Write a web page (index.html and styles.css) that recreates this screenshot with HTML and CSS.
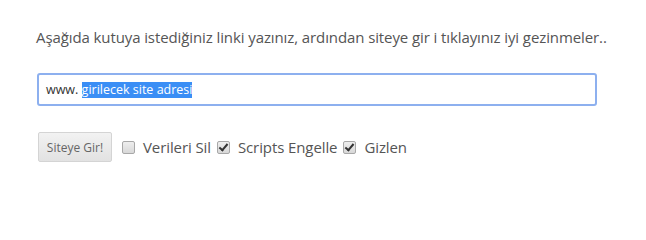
FILE: index.html
```html
<!DOCTYPE html>
<html lang="tr">
<head>
<meta charset="utf-8">
<link rel="stylesheet" href="styles.css">
</head>
<body>
<div class="page">
  <p class="intro">Aşağıda kutuya istediğiniz linki yazınız, ardından siteye gir i tıklayınız iyi gezinmeler..</p>
  <div class="url-box"><span class="prefix">www.&nbsp;</span><span class="sel">girilecek site adresi</span></div>
  <div class="controls">
    <button class="btn">Siteye Gir!</button>
    <label class="opt"><span class="cb"></span>Verileri Sil</label>
    <label class="opt"><span class="cb checked"></span>Scripts Engelle</label>
    <label class="opt"><span class="cb checked"></span>Gizlen</label>
  </div>
</div>
</body>
</html>
```
FILE: styles.css
```css
html, body { margin: 0; padding: 0; background: #fff; }
.page {
  padding: 26px 0 0 36px;
  font-family: "Open Sans", "Liberation Sans", sans-serif;
  color: #555;
}
.intro {
  margin: 0;
  font-size: 15px;
  line-height: 22px;
  letter-spacing: -0.1px;
}
.url-box {
  margin-top: 25px;
  margin-left: 1px;
  width: 549px;
  height: 29px;
  border: 2px solid #8db0ef;
  border-radius: 3px;
  display: flex;
  align-items: center;
  padding-left: 7px;
  box-sizing: content-box;
  font-size: 12.5px;
  color: #333;
}
.sel {
  background: #3a8ef5;
  color: #fff;
  line-height: 16px;
}
.controls {
  margin-top: 26px;
  margin-left: 2px;
  display: flex;
  align-items: center;
}
.btn {
  width: 74px;
  height: 30px;
  border: 1px solid #d4d4d4;
  border-radius: 2px;
  background: linear-gradient(#f2f2f2, #e2e2e2);
  font-family: "Open Sans", "Liberation Sans", sans-serif;
  font-size: 12px;
  color: #666;
  padding: 0;
  margin-right: 10px;
}
.opt {
  display: flex;
  align-items: center;
  font-size: 15px;
  letter-spacing: -0.1px;
  color: #555;
  margin-right: 6px;
}
.cb {
  width: 11px;
  height: 11px;
  border: 1px solid #a8a8a8;
  border-radius: 2px;
  background: linear-gradient(#eee, #d8d8d8);
  margin-right: 8px;
  position: relative;
}
.cb.checked::after {
  content: "";
  position: absolute;
  left: 3px;
  top: 0px;
  width: 3px;
  height: 7px;
  border: solid #333;
  border-width: 0 2px 2px 0;
  transform: rotate(40deg);
}
```
